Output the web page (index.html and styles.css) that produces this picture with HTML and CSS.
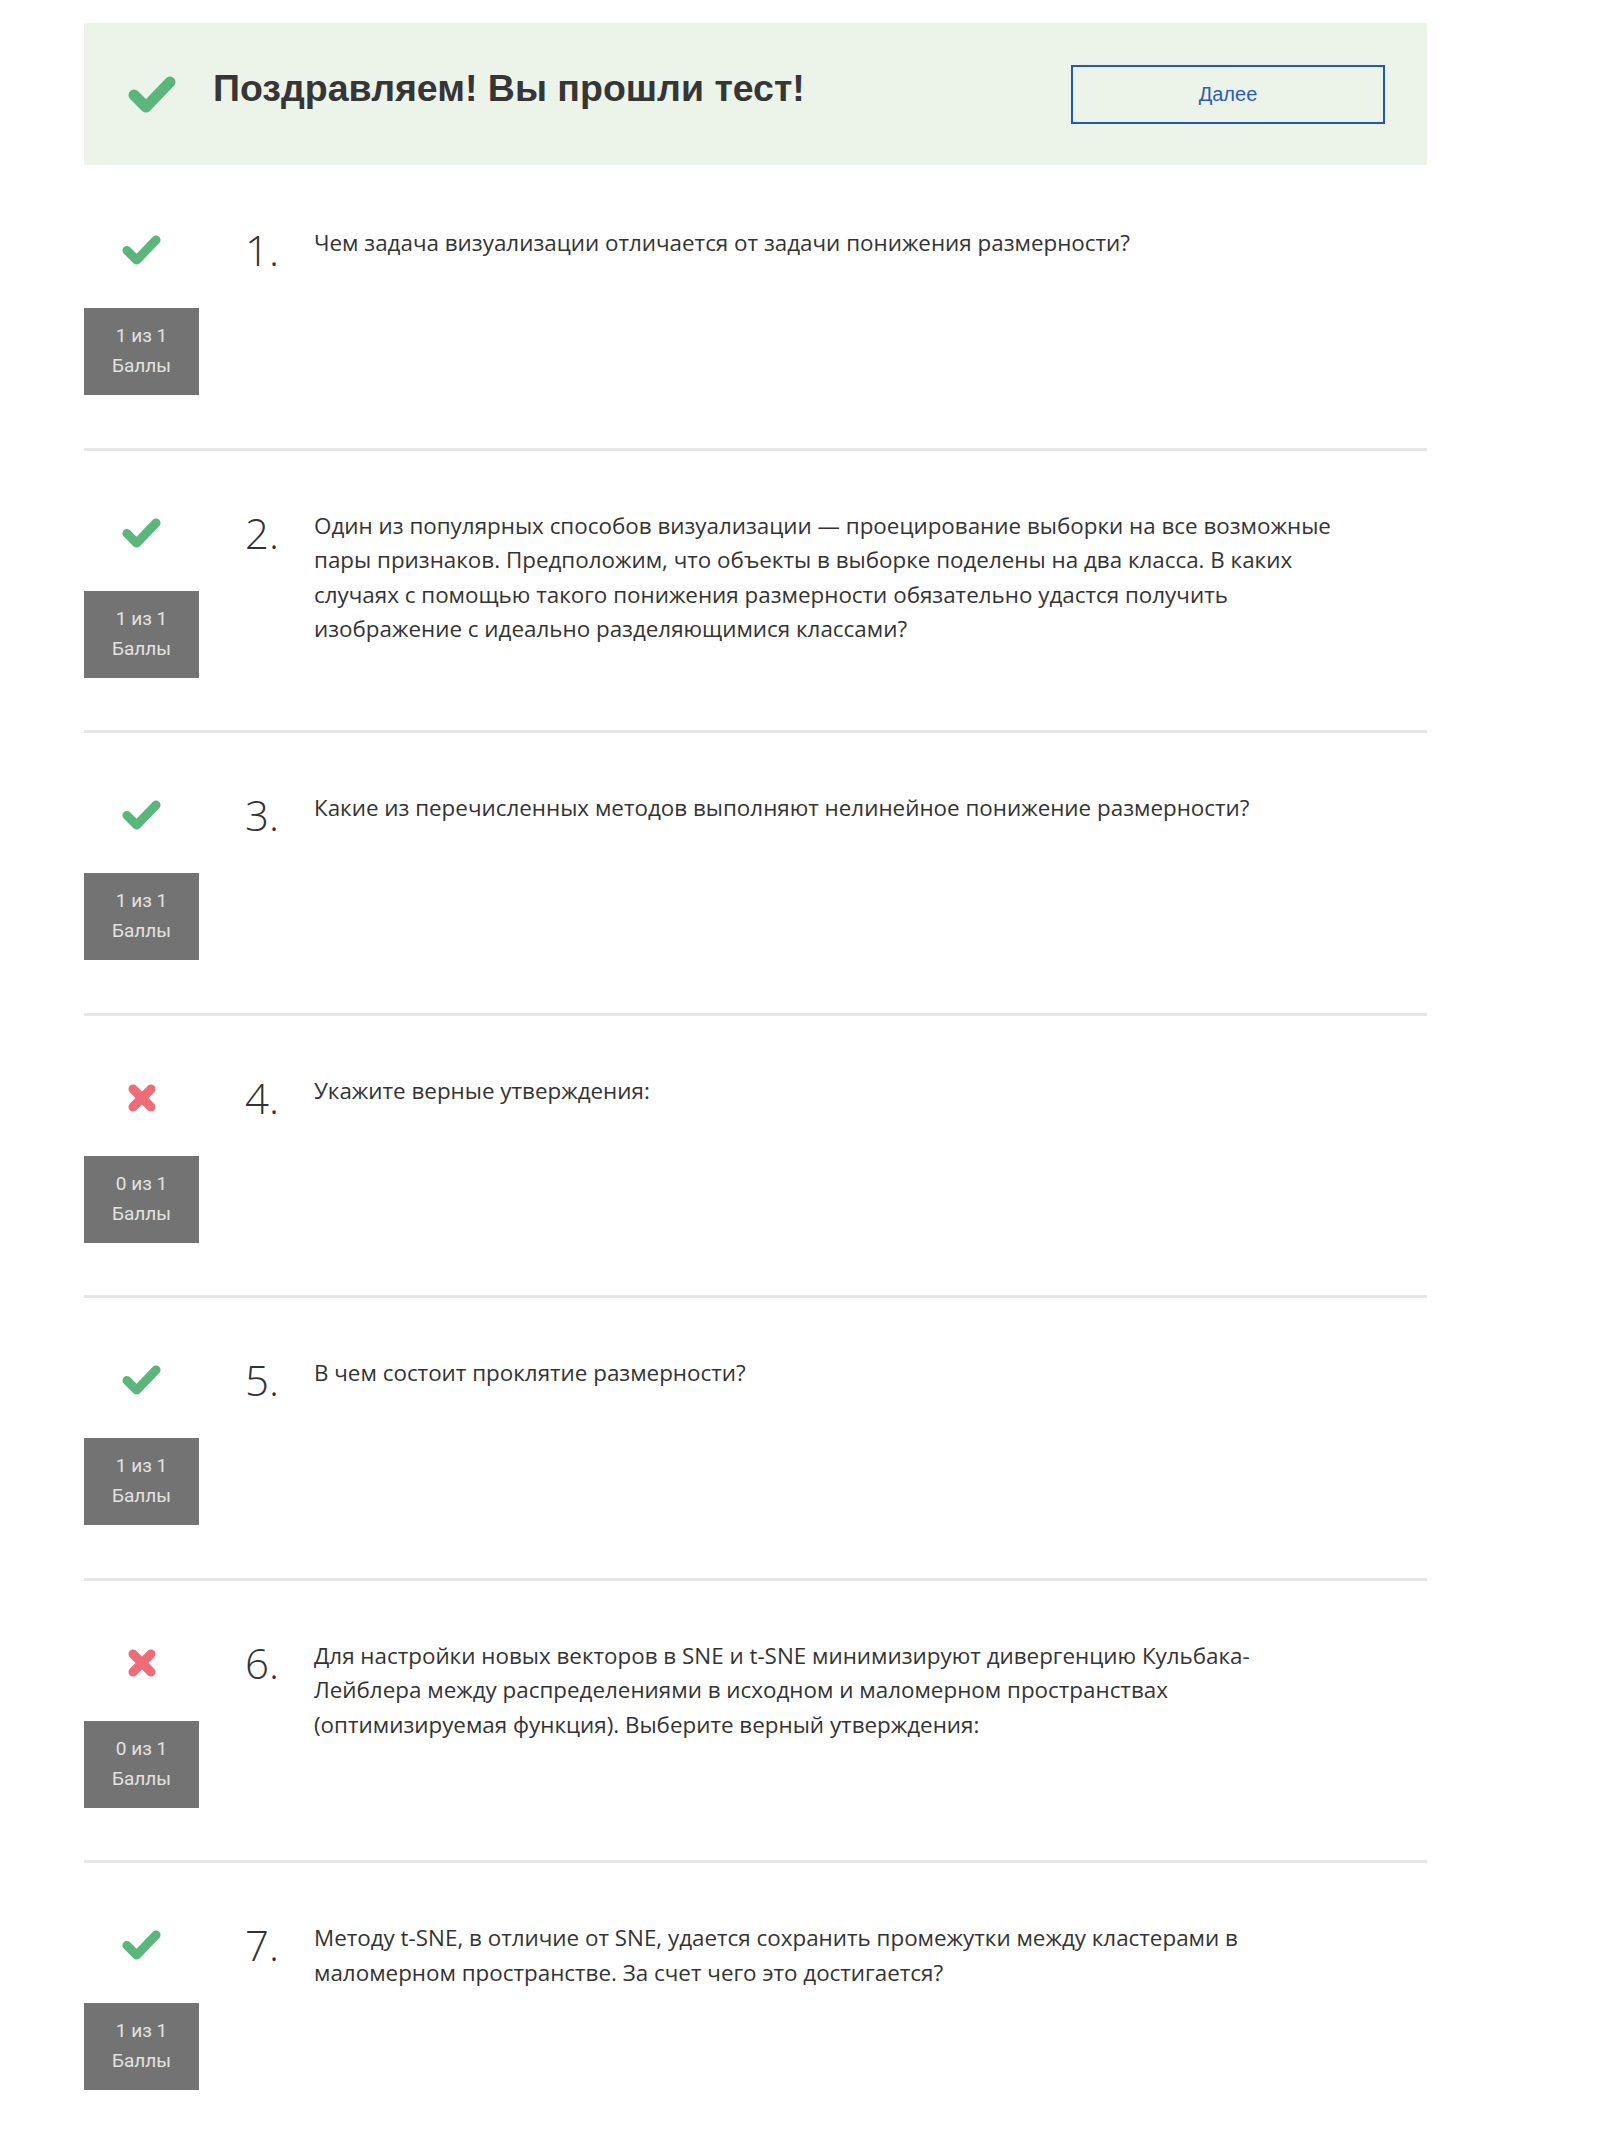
FILE: index.html
```html
<!DOCTYPE html>
<html lang="ru">
<head>
<meta charset="utf-8">
<title>Тест</title>
<link rel="stylesheet" href="styles.css">
</head>
<body>
<div class="page">
  <div class="banner">
    <svg class="banner-check" viewBox="0 0 48 37"><polyline points="6,19 18,31 42,6"/></svg>
    <h1 class="banner-title">Поздравляем! Вы прошли тест!</h1>
    <button class="next-btn">Далее</button>
  </div>

  <div class="q q-first">
    <div class="q-side">
      <svg class="mark mark-ok" viewBox="0 0 48 37"><polyline points="6,19 18,31 42,6"/></svg>
      <div class="score">1 из 1<br>Баллы</div>
    </div>
    <div class="q-num">1.</div>
    <div class="q-text">Чем задача визуализации отличается от задачи понижения размерности?</div>
  </div>

  <div class="q">
    <div class="q-side">
      <svg class="mark mark-ok" viewBox="0 0 48 37"><polyline points="6,19 18,31 42,6"/></svg>
      <div class="score">1 из 1<br>Баллы</div>
    </div>
    <div class="q-num">2.</div>
    <div class="q-text">Один из популярных способов визуализации — проецирование выборки на все возможные пары признаков. Предположим, что объекты в выборке поделены на два класса. В каких случаях с помощью такого понижения размерности обязательно удастся получить изображение с идеально разделяющимися классами?</div>
  </div>

  <div class="q">
    <div class="q-side">
      <svg class="mark mark-ok" viewBox="0 0 48 37"><polyline points="6,19 18,31 42,6"/></svg>
      <div class="score">1 из 1<br>Баллы</div>
    </div>
    <div class="q-num">3.</div>
    <div class="q-text">Какие из перечисленных методов выполняют нелинейное понижение размерности?</div>
  </div>

  <div class="q">
    <div class="q-side">
      <svg class="mark mark-bad" viewBox="0 0 30 30"><line x1="6" y1="6" x2="24" y2="24"/><line x1="24" y1="6" x2="6" y2="24"/></svg>
      <div class="score">0 из 1<br>Баллы</div>
    </div>
    <div class="q-num">4.</div>
    <div class="q-text">Укажите верные утверждения:</div>
  </div>

  <div class="q">
    <div class="q-side">
      <svg class="mark mark-ok" viewBox="0 0 48 37"><polyline points="6,19 18,31 42,6"/></svg>
      <div class="score">1 из 1<br>Баллы</div>
    </div>
    <div class="q-num">5.</div>
    <div class="q-text">В чем состоит проклятие размерности?</div>
  </div>

  <div class="q">
    <div class="q-side">
      <svg class="mark mark-bad" viewBox="0 0 30 30"><line x1="6" y1="6" x2="24" y2="24"/><line x1="24" y1="6" x2="6" y2="24"/></svg>
      <div class="score">0 из 1<br>Баллы</div>
    </div>
    <div class="q-num">6.</div>
    <div class="q-text">Для настройки новых векторов в SNE и t-SNE минимизируют дивергенцию Кульбака-Лейблера между распределениями в исходном и маломерном пространствах (оптимизируемая функция). Выберите верный утверждения:</div>
  </div>

  <div class="q">
    <div class="q-side">
      <svg class="mark mark-ok" viewBox="0 0 48 37"><polyline points="6,19 18,31 42,6"/></svg>
      <div class="score">1 из 1<br>Баллы</div>
    </div>
    <div class="q-num">7.</div>
    <div class="q-text">Методу t-SNE, в отличие от SNE, удается сохранить промежутки между кластерами в маломерном пространстве. За счет чего это достигается?</div>
  </div>
</div>
</body>
</html>
```

FILE: styles.css
```css
html, body {
  margin: 0;
  padding: 0;
  background: #ffffff;
}

body {
  font-family: "Liberation Sans", Arial, sans-serif;
  color: #333333;
}

.page {
  width: 1343px;
  margin-left: 84px;
  padding-top: 23px;
}

/* Banner */
.banner {
  height: 142px;
  background: #ecf4ea;
  display: flex;
  align-items: center;
  padding: 0 42px 0 44px;
  box-sizing: border-box;
}

.banner-check {
  width: 48px;
  height: 37px;
  flex: none;
}

.banner-check polyline,
.mark-ok polyline {
  fill: none;
  stroke: #5bb67b;
  stroke-width: 11;
  stroke-linecap: round;
  stroke-linejoin: round;
}

.banner-title {
  margin: 0 0 11px 37px;
  font-size: 37.5px;
  font-weight: bold;
  color: #363636;
  flex: 1;
  white-space: nowrap;
}

.next-btn {
  width: 314px;
  height: 59px;
  background: transparent;
  border: 2px solid #2557b2;
  color: #2a5cb4;
  font-family: "Liberation Sans", Arial, sans-serif;
  font-size: 20px;
  padding: 0;
  flex: none;
}

/* Questions */
.q {
  display: flex;
  align-items: flex-start;
  height: 282.5px;
  box-sizing: border-box;
  border-top: 3px solid #e6e6e6;
}

.q-first {
  border-top-color: transparent;
}

.q:last-child {
  height: auto;
  padding-bottom: 40px;
}

.q-side {
  width: 115px;
  flex: none;
  display: flex;
  flex-direction: column;
  align-items: center;
  margin-top: 67px;
}

.mark {
  display: block;
}

.mark-ok {
  width: 39px;
  height: 30px;
}

.mark-bad {
  width: 30px;
  height: 30px;
}

.mark-bad line {
  stroke: #ef6b78;
  stroke-width: 9;
  stroke-linecap: round;
}

.score {
  margin-top: 43px;
  width: 115px;
  height: 87px;
  box-sizing: border-box;
  padding-top: 13px;
  background: #737373;
  color: #e2e2e2;
  font-family: Roboto, "Liberation Sans", sans-serif;
  font-size: 19px;
  line-height: 30px;
  text-align: center;
}

.q-num {
  flex: none;
  width: 69px;
  margin-left: 46px;
  margin-top: 61px;
  font-family: "Open Sans", "Liberation Sans", sans-serif;
  font-weight: 300;
  font-size: 42px;
  line-height: 42px;
  color: #333333;
}

.q-text {
  width: 1042px;
  margin-top: 58px;
  font-family: "Open Sans", "Liberation Sans", sans-serif;
  font-size: 22.4px;
  line-height: 34.5px;
  color: #333333;
}
```
